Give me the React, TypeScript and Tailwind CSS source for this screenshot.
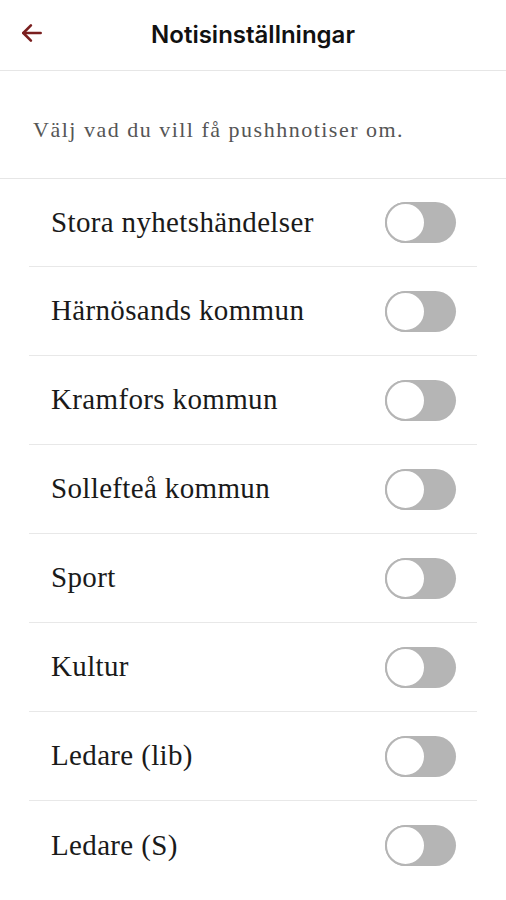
import React from "react";

const items = [
  "Stora nyhetshändelser",
  "Härnösands kommun",
  "Kramfors kommun",
  "Sollefteå kommun",
  "Sport",
  "Kultur",
  "Ledare (lib)",
  "Ledare (S)",
];

function Toggle() {
  return (
    <div className="relative h-[41px] w-[71px] rounded-full bg-[#b5b5b5]">
      <div className="absolute left-0 top-0 h-[41px] w-[41px] rounded-full border-2 border-[#b5b5b5] bg-white" />
    </div>
  );
}

export default function App() {
  return (
    <div className="min-h-[900px] w-[506px] bg-white">
      <div className="relative flex h-[71px] items-center justify-center border-b border-[#e6e6e6]">
        <svg
          className="absolute left-[19px] top-[20px]"
          width="26"
          height="26"
          viewBox="0 0 24 24"
          fill="none"
          stroke="#7a1f1f"
          strokeWidth="2.4"
          strokeLinecap="round"
          strokeLinejoin="round"
        >
          <path d="M20 12H4" />
          <path d="M11 5l-7 7 7 7" />
        </svg>
        <span
          className="text-[24px] font-semibold text-[#111]"
          style={{ fontFamily: "Inter, Roboto, sans-serif" }}
        >
          Notisinställningar
        </span>
      </div>
      <div
        className="flex h-[108px] items-center border-b border-[#e6e6e6] px-[33px] pt-[10px] text-[22px] tracking-[1.5px] text-[#555]"
        style={{ fontFamily: "'Liberation Serif', serif" }}
      >
        Välj vad du vill få pushhnotiser om.
      </div>
      <div className="px-[29px]" style={{ fontFamily: "'Liberation Serif', serif" }}>
        {items.map((t, i) => (
          <div
            key={t}
            className={`flex items-center justify-between pl-[22px] pr-[21px] ${
              i < items.length - 1 ? "border-b border-[#e8e8e8]" : ""
            } ${i === 0 ? "h-[88px]" : "h-[89px]"}`}
          >
            <span className="text-[29px] tracking-[0.35px] text-[#1a1a1a]">{t}</span>
            <Toggle />
          </div>
        ))}
      </div>
    </div>
  );
}
